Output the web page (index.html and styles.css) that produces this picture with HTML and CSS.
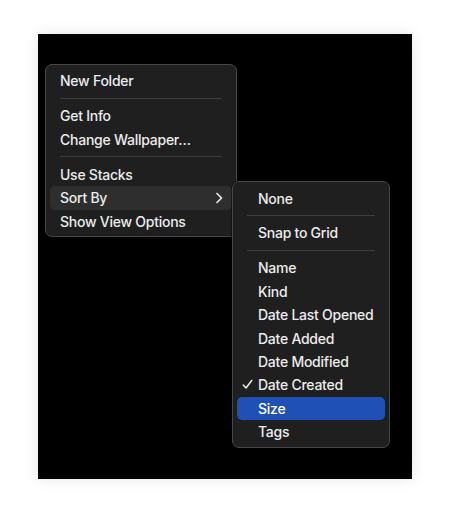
FILE: index.html
```html
<!DOCTYPE html>
<html lang="en">
<head>
<meta charset="utf-8">
<title>Desktop context menu</title>
<link rel="stylesheet" href="styles.css">
</head>
<body>
<div class="desktop">
  <div class="menu main-menu">
    <div class="item">New Folder</div>
    <div class="sep"></div>
    <div class="item">Get Info</div>
    <div class="item">Change Wallpaper…</div>
    <div class="sep"></div>
    <div class="item">Use Stacks</div>
    <div class="item hover">Sort By
      <svg class="chev" width="8" height="12" viewBox="0 0 8 12"><polyline points="2,1.5 6.5,6 2,10.5" fill="none" stroke="#e6e6e6" stroke-width="1.7" stroke-linecap="round" stroke-linejoin="round"/></svg>
    </div>
    <div class="item">Show View Options</div>
  </div>
  <div class="menu sub-menu">
    <div class="item">None</div>
    <div class="sep"></div>
    <div class="item">Snap to Grid</div>
    <div class="sep"></div>
    <div class="item">Name</div>
    <div class="item">Kind</div>
    <div class="item">Date Last Opened</div>
    <div class="item">Date Added</div>
    <div class="item">Date Modified</div>
    <div class="item checked">
      <svg class="check" width="11" height="11" viewBox="0 0 11 11"><polyline points="1.3,6 4,9 9.7,1.5" fill="none" stroke="#e6e6e6" stroke-width="1.6" stroke-linecap="round" stroke-linejoin="round"/></svg>
      Date Created</div>
    <div class="item selected">Size</div>
    <div class="item">Tags</div>
  </div>
</div>
</body>
</html>
```
FILE: styles.css
```css
* { box-sizing: border-box; }
html, body { margin: 0; padding: 0; background: #ffffff; }
body {
  width: 450px;
  height: 514px;
  padding: 34px 0 0 38px;
  font-family: Inter, "Noto Sans", "Liberation Sans", sans-serif;
}
.desktop {
  position: relative;
  width: 374px;
  height: 445px;
  background: #000000;
  box-shadow: 0 0 14px rgba(0, 0, 0, 0.10);
}
.menu {
  position: absolute;
  background: #1f1f1f;
  border: 1px solid #474747;
  border-radius: 7px;
  box-shadow: 0 0 0 0.5px #000;
  color: #ececec;
  font-size: 14px;
  font-weight: 500;
  letter-spacing: -0.25px;
}
.main-menu {
  left: 7px;
  top: 30px;
  width: 192px;
  height: 173px;
  padding: 4px 4px 3px;
}
.sub-menu {
  left: 194px;
  top: 147px;
  width: 158px;
  height: 267px;
  padding: 4.5px 4px 3px;
}
.item {
  position: relative;
  height: 23.5px;
  line-height: 23.5px;
  padding-left: 10px;
  border-radius: 5px;
  white-space: nowrap;
}
.sub-menu .item {
  height: 23.4px;
  line-height: 23.4px;
  padding-left: 21px;
}
.sep {
  height: 1px;
  margin: 5px 10px 5.5px 10px;
  background: #3c3c3c;
}
.sub-menu .sep {
  margin: 5.3px 10px 5.3px 10px;
}
.hover {
  background: #2e2e2e;
}
.selected {
  background: #1f50b5;
  color: #ffffff;
}
.chev {
  position: absolute;
  right: 9px;
  top: 6px;
}
.check {
  position: absolute;
  left: 5px;
  top: 6px;
}
```
